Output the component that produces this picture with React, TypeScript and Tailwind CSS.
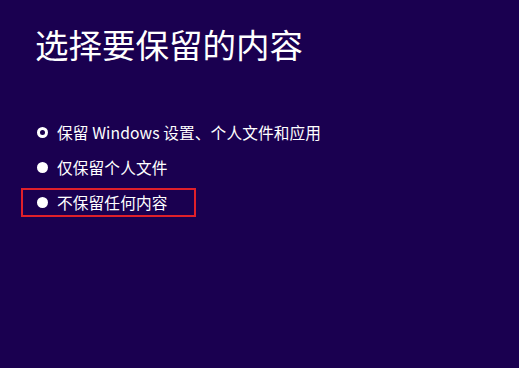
import React, { useState } from 'react';

const options = [
    '保留 Windows 设置、个人文件和应用',
    '仅保留个人文件',
    '不保留任何内容',
];

const font = { fontFamily: '"Noto Sans CJK SC", "Noto Sans", sans-serif' };

const App: React.FC = () => {
    const [selected, setSelected] = useState(0);

    return (
        <div className="w-[519px] h-[368px] bg-[#1a0050] text-white overflow-hidden" style={font}>
            <h1 className="pl-[35px] pt-[24px] text-[33.5px] leading-[40px] font-normal">
                选择要保留的内容
            </h1>

            <div className="mt-[51px] flex flex-col">
                {options.map((label, i) => (
                    <div key={label} className="h-[35px] flex items-center pl-[21px]">
                        <button
                            onClick={() => setSelected(i)}
                            className={`h-[29px] flex items-center pl-[14px] pr-[26px] border-2 ${
                                i === 2 ? 'border-[#e0202a]' : 'border-transparent'
                            }`}
                        >
                            <span className="w-[11px] h-[11px] rounded-full bg-white flex items-center justify-center shrink-0">
                                {selected === i && (
                                    <span className="w-[5px] h-[5px] rounded-full bg-[#1a0050]" />
                                )}
                            </span>
                            <span className="ml-[9px] text-[15.7px] leading-[20px] whitespace-nowrap tracking-[0.1px]">{label}</span>
                        </button>
                    </div>
                ))}
            </div>
        </div>
    );
};

export default App;
